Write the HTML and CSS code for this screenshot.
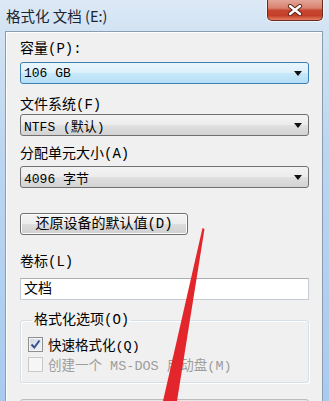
FILE: index.html
```html
<!DOCTYPE html>
<html lang="zh-CN">
<head>
<meta charset="utf-8">
<title>格式化 文档 (E:)</title>
<link rel="stylesheet" href="styles.css">
</head>
<body>
<div class="window">
  <div class="titlebar">
    <span class="title">格式化 文档 (E:)</span>
    <div class="close">
      <svg width="18" height="12" viewBox="0 0 18 12">
        <path d="M4 2 L14 10 M14 2 L4 10" stroke="#5a2118" stroke-width="4.2" stroke-linecap="round"/>
        <path d="M4 2 L14 10 M14 2 L4 10" stroke="#ffffff" stroke-width="2.4" stroke-linecap="round"/>
      </svg>
    </div>
  </div>
  <div class="client">
    <div class="label l1">容量(P):</div>
    <div class="combo focus c1"><span class="val">106 GB</span><i class="arrow"></i></div>
    <div class="label l2">文件系统(F)</div>
    <div class="combo c2"><span class="val">NTFS (默认)</span><i class="arrow"></i></div>
    <div class="label l3">分配单元大小(A)</div>
    <div class="combo c3"><span class="val">4096 字节</span><i class="arrow"></i></div>
    <div class="btn">还原设备的默认值(D)</div>
    <div class="label l4">卷标(L)</div>
    <div class="field">文档</div>
    <fieldset class="group">
      <legend>格式化选项(O)</legend>
      <div class="cb-row">
        <span class="cb checked">
          <svg width="11" height="11" viewBox="0 0 11 11"><path d="M1.5 5.5 L4.3 8.5 L9.5 1.5" fill="none" stroke="#3a4f8a" stroke-width="2"/></svg>
        </span>
        <span class="cb-label">快速格式化(Q)</span>
      </div>
      <div class="cb-row disabled">
        <span class="cb"></span>
        <span class="cb-label">创建一个 MS-DOS 启动盘(M)</span>
      </div>
    </fieldset>
    <div class="progress"></div>
  </div>
  <svg class="red-arrow" width="329" height="401" viewBox="0 0 329 401">
    <polygon points="202.5,228 204.5,229 177,401 163,401" fill="#e3262b"/>
  </svg>
</div>
</body>
</html>
```
FILE: styles.css
```css
html, body {
  margin: 0;
  padding: 0;
}

.window {
  position: relative;
  width: 329px;
  height: 401px;
  overflow: hidden;
  display: flex;
  flex-direction: column;
  background: linear-gradient(180deg, #dde9f5 0px, #d2e3f3 30px, #bcd6f0 150px, #a9cbef 401px);
  font-family: "Liberation Mono", "Noto Sans CJK SC", monospace;
  color: #000;
}

.titlebar {
  height: 31px;
  flex: none;
  display: flex;
  justify-content: space-between;
  align-items: flex-start;
  padding-left: 6px;
}

.title {
  font-family: "Noto Sans CJK SC", sans-serif;
  font-size: 14.5px;
  line-height: 31px;
  color: #1b2430;
}

.close {
  margin-right: 6px;
  width: 54px;
  height: 20px;
  border: 1px solid #6a2a20;
  border-top: none;
  border-radius: 0 0 5px 5px;
  background: linear-gradient(180deg, #e2a699 0%, #d98170 40%, #c6452f 52%, #c43f2a 78%, #e3805f 100%);
  box-shadow: 0 0 0 1px rgba(255, 255, 255, 0.55);
  display: flex;
  align-items: center;
  justify-content: center;
}

.client {
  flex: 1;
  margin: 0 6px 0 5px;
  border: 1px solid #8a9cb0;
  border-bottom: none;
  background: #f0f0f0;
  box-shadow: inset 1px 1px 0 #ffffff;
  padding: 8px 13px 0 14px;
}

.label {
  font-size: 14px;
  line-height: 18px;
  height: 18px;
  white-space: nowrap;
}

.l2 { margin-top: 12px; }
.l3 { margin-top: 9px; }
.l4 { margin-top: 18px; }

.combo {
  height: 20px;
  border: 1px solid #707070;
  border-radius: 3px;
  background: linear-gradient(180deg, #f3f3f3 0%, #ececec 50%, #e0e0e0 51%, #d3d3d3 100%);
  display: flex;
  align-items: center;
  justify-content: space-between;
  padding: 0 6px 0 3px;
  font-size: 13px;
  white-space: nowrap;
}

.combo.focus {
  border-color: #3c7fb1;
  background: linear-gradient(180deg, #eaf6fd 0%, #dcf0fb 50%, #c8e8f9 51%, #b4def6 100%);
}

.c1 { margin-top: 4px; }
.c2 { margin-top: 0; }
.c3 { margin-top: 3px; }

.arrow {
  width: 0;
  height: 0;
  border-left: 4px solid transparent;
  border-right: 4px solid transparent;
  border-top: 5px solid #111;
}

.btn {
  margin-top: 25px;
  width: 166px;
  height: 20px;
  border: 1px solid #707070;
  border-radius: 3px;
  background: linear-gradient(180deg, #f3f3f3 0%, #ececec 50%, #dddddd 51%, #cfcfcf 100%);
  box-shadow: inset 0 0 0 1px #fcfcfc;
  font-size: 14px;
  line-height: 20px;
  text-align: center;
  white-space: nowrap;
}

.field {
  margin-top: 7px;
  height: 20px;
  border: 1px solid #c5cbd2;
  border-top-color: #abadb3;
  background: #ffffff;
  font-size: 14px;
  line-height: 20px;
  padding-left: 3px;
}

.group {
  margin: 11px 0 0 0;
  padding: 5px 0 8px 7px;
  border: 1px solid #d5dfe5;
  border-radius: 3px;
  box-shadow: inset 1px 1px 0 #ffffff, 1px 1px 0 #ffffff;
  min-width: 0;
}

.group legend {
  font-size: 14px;
  line-height: 18px;
  padding: 0 2px;
  margin-left: 4px;
}

.cb-row {
  display: flex;
  align-items: center;
  gap: 5px;
  height: 20px;
}

.cb {
  width: 13px;
  height: 13px;
  border: 1px solid #8e8f8f;
  background: linear-gradient(135deg, #dcdcdc 0%, #f6f6f6 100%);
  box-shadow: inset 0 0 0 1px #f4f4f4;
  display: flex;
  align-items: center;
  justify-content: center;
}

.cb.checked {
  background: linear-gradient(135deg, #cfd6e4 0%, #f2f4f8 100%);
}

.cb-label {
  font-size: 13.5px;
  white-space: nowrap;
}

.disabled .cb {
  border-color: #c9c9c9;
  background: #f6f6f6;
  box-shadow: none;
}

.disabled .cb-label {
  color: #9d9d9d;
}

.progress {
  margin-top: 16px;
  height: 20px;
  border: 1px solid #bcbcbc;
  border-radius: 3px;
  background: #e6e6e6;
}

.red-arrow {
  position: absolute;
  left: 0;
  top: 0;
  pointer-events: none;
}
```
